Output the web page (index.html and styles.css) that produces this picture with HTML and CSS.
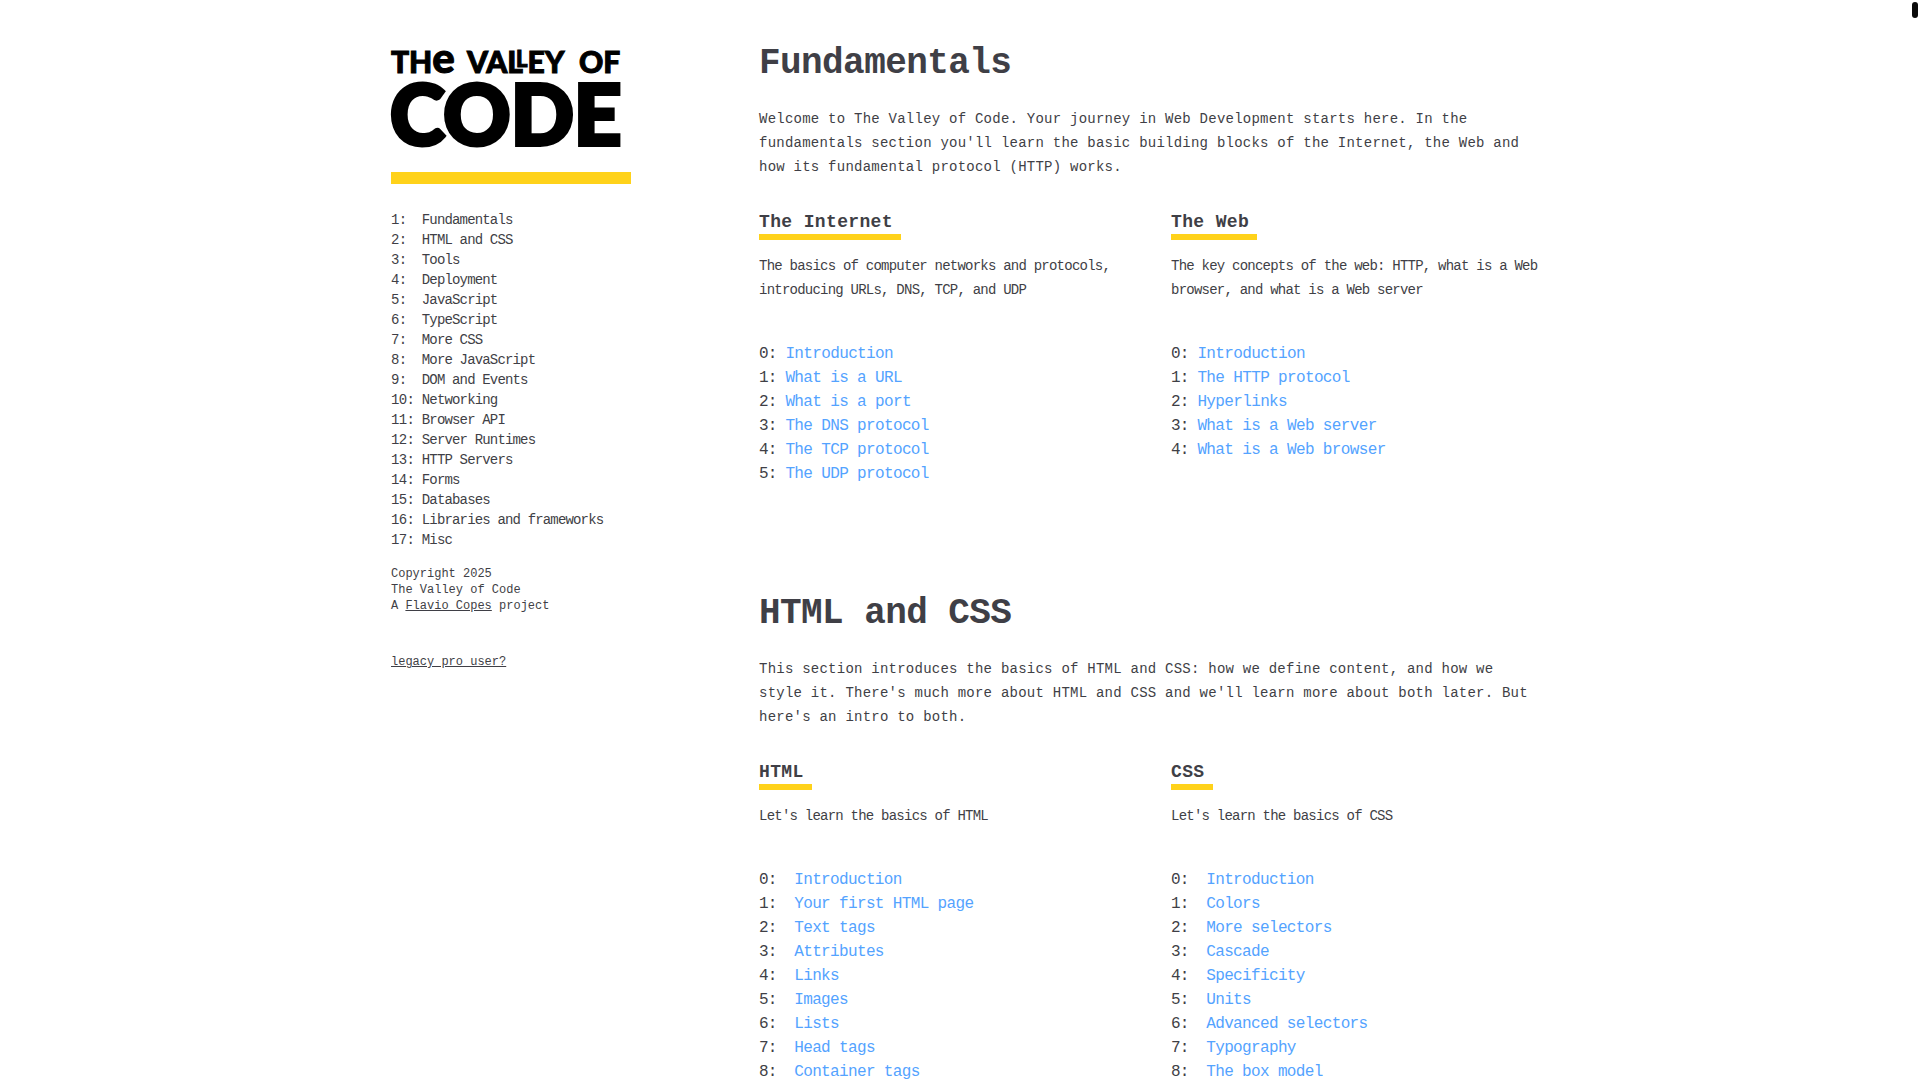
FILE: index.html
```html
<!DOCTYPE html>
<html lang="en">
  <head>
    <meta charset="UTF-8" />
    <meta name="viewport" content="width=device-width, initial-scale=1.0" />
    <title>The Valley of Code</title>
    <link rel="stylesheet" href="styles.css">
  </head>
  <body>
    <div class="page">
      <aside class="sidebar">
        <a class="logo" href="#" aria-label="The Valley of Code">
          <svg viewBox="0 0 240 102" role="img" aria-hidden="true">
            <text class="logo-small" x="0" y="25">TH<tspan class="logo-e">e</tspan></text>
            <text class="logo-small" x="76" y="25">VAL<tspan class="logo-l" dx="-7" dy="-6">L</tspan><tspan dy="6">EY</tspan></text>
            <text class="logo-small" x="188" y="25">OF</text>
            <text class="logo-big" x="-1" y="97">CODE</text>
          </svg>
        </a>
        <div class="rule"></div>
        <nav>
          <ul class="menu">
            <li>1:  <a href="#fundamentals">Fundamentals</a></li>
            <li>2:  <a href="#html-css">HTML and CSS</a></li>
            <li>3:  <a href="#">Tools</a></li>
            <li>4:  <a href="#">Deployment</a></li>
            <li>5:  <a href="#">JavaScript</a></li>
            <li>6:  <a href="#">TypeScript</a></li>
            <li>7:  <a href="#">More CSS</a></li>
            <li>8:  <a href="#">More JavaScript</a></li>
            <li>9:  <a href="#">DOM and Events</a></li>
            <li>10: <a href="#">Networking</a></li>
            <li>11: <a href="#">Browser API</a></li>
            <li>12: <a href="#">Server Runtimes</a></li>
            <li>13: <a href="#">HTTP Servers</a></li>
            <li>14: <a href="#">Forms</a></li>
            <li>15: <a href="#">Databases</a></li>
            <li>16: <a href="#">Libraries and frameworks</a></li>
            <li>17: <a href="#">Misc</a></li>
          </ul>
        </nav>
        <footer class="credits">
          <p>Copyright 2025<br>The Valley of Code<br>A <a href="#">Flavio Copes</a> project</p>
          <p><a href="#">legacy pro user?</a></p>
        </footer>
      </aside>

      <main class="content">
        <section class="section" id="fundamentals">
          <h1>Fundamentals</h1>
          <p class="intro">Welcome to The Valley of Code. Your journey in Web Development starts here. In the fundamentals section you'll learn the basic building blocks of the Internet, the Web and how its fundamental protocol (HTTP) works.</p>
          <div class="units">
            <article>
              <h2>The Internet</h2>
              <p class="summary">The basics of computer networks and protocols, introducing URLs, DNS, TCP, and UDP</p>
              <ul class="lessons">
                <li>0: <a href="#">Introduction</a></li>
                <li>1: <a href="#">What is a URL</a></li>
                <li>2: <a href="#">What is a port</a></li>
                <li>3: <a href="#">The DNS protocol</a></li>
                <li>4: <a href="#">The TCP protocol</a></li>
                <li>5: <a href="#">The UDP protocol</a></li>
              </ul>
            </article>
            <article>
              <h2>The Web</h2>
              <p class="summary">The key concepts of the web: HTTP, what is a Web browser, and what is a Web server</p>
              <ul class="lessons">
                <li>0: <a href="#">Introduction</a></li>
                <li>1: <a href="#">The HTTP protocol</a></li>
                <li>2: <a href="#">Hyperlinks</a></li>
                <li>3: <a href="#">What is a Web server</a></li>
                <li>4: <a href="#">What is a Web browser</a></li>
              </ul>
            </article>
          </div>
        </section>

        <section class="section" id="html-css">
          <h1>HTML and CSS</h1>
          <p class="intro">This section introduces the basics of HTML and CSS: how we define content, and how we style it. There's much more about HTML and CSS and we'll learn more about both later. But here's an intro to both.</p>
          <div class="units">
            <article>
              <h2>HTML</h2>
              <p class="summary">Let's learn the basics of HTML</p>
              <ul class="lessons">
                <li>0:  <a href="#">Introduction</a></li>
                <li>1:  <a href="#">Your first HTML page</a></li>
                <li>2:  <a href="#">Text tags</a></li>
                <li>3:  <a href="#">Attributes</a></li>
                <li>4:  <a href="#">Links</a></li>
                <li>5:  <a href="#">Images</a></li>
                <li>6:  <a href="#">Lists</a></li>
                <li>7:  <a href="#">Head tags</a></li>
                <li>8:  <a href="#">Container tags</a></li>
              </ul>
            </article>
            <article>
              <h2>CSS</h2>
              <p class="summary">Let's learn the basics of CSS</p>
              <ul class="lessons">
                <li>0:  <a href="#">Introduction</a></li>
                <li>1:  <a href="#">Colors</a></li>
                <li>2:  <a href="#">More selectors</a></li>
                <li>3:  <a href="#">Cascade</a></li>
                <li>4:  <a href="#">Specificity</a></li>
                <li>5:  <a href="#">Units</a></li>
                <li>6:  <a href="#">Advanced selectors</a></li>
                <li>7:  <a href="#">Typography</a></li>
                <li>8:  <a href="#">The box model</a></li>
              </ul>
            </article>
          </div>
        </section>
      </main>
    </div>
    <div class="scroll-thumb"></div>
  </body>
</html>
```
FILE: styles.css
```css
* {
  box-sizing: border-box;
}

body {
  margin: 0;
  height: 100vh;
  overflow: hidden;
  background-color: #fff;
  color: #3f3f46;
  font-family: "Liberation Mono", monospace;
  font-size: 16px;
  line-height: 24px;
}

h1,
h2,
p,
ul {
  margin: 0;
  padding: 0;
}

ul {
  list-style: none;
}

a {
  color: inherit;
}

.page {
  display: grid;
  grid-template-columns: 240px 1fr;
  gap: 128px;
  max-width: 1170px;
  margin: 0 auto;
  padding-left: 16px;
}

.sidebar {
  padding-top: 48px;
}

.logo,
.logo svg {
  display: block;
  overflow: visible;
}

.logo-small,
.logo-big {
  font-family: Lato, sans-serif;
  font-weight: 900;
  fill: #000;
  stroke: #000;
}

.logo-small {
  font-size: 30px;
  stroke-width: 1px;
}

.logo-e {
  font-size: 42px;
}

.logo-l {
  font-size: 22px;
}

.logo-big {
  font-size: 83px;
  stroke-width: 4px;
}

.rule {
  height: 12px;
  margin: 22px 0 26px;
  background-color: #ffd21a;
}

.menu {
  font-size: 14px;
  line-height: 20px;
  letter-spacing: -0.05em;
}

.menu li,
.lessons li {
  white-space: pre;
}

.menu a,
.lessons a {
  text-decoration: none;
}

.menu a {
  letter-spacing: -0.06em;
}

.credits {
  margin-top: 16px;
  font-size: 12px;
  line-height: 16px;
}

.credits p {
  margin-bottom: 40px;
}

.section {
  padding: 44px 0 64px;
}

h1 {
  font-size: 36px;
  line-height: 40px;
  letter-spacing: -0.016em;
}

.intro {
  max-width: 780px;
  margin-top: 23px;
  font-size: 14px;
  line-height: 24px;
  letter-spacing: 0.017em;
}

.units {
  display: grid;
  grid-template-columns: 1fr 1fr;
  gap: 38px;
  margin-top: 31px;
}

h2 {
  width: fit-content;
  padding-right: 8px;
  border-bottom: 6px solid #ffd21a;
  font-size: 18px;
  letter-spacing: 0.02em;
}

.summary {
  margin-top: 14px;
  font-size: 14px;
  letter-spacing: -0.055em;
}

.lessons {
  margin-top: 40px;
  letter-spacing: -0.05em;
}

.lessons a {
  color: #54a3ff;
  letter-spacing: -0.04em;
}

.scroll-thumb {
  position: fixed;
  top: 2px;
  right: 2px;
  width: 6px;
  height: 16px;
  border-radius: 3px;
  background-color: #0a0a0a;
}
```
